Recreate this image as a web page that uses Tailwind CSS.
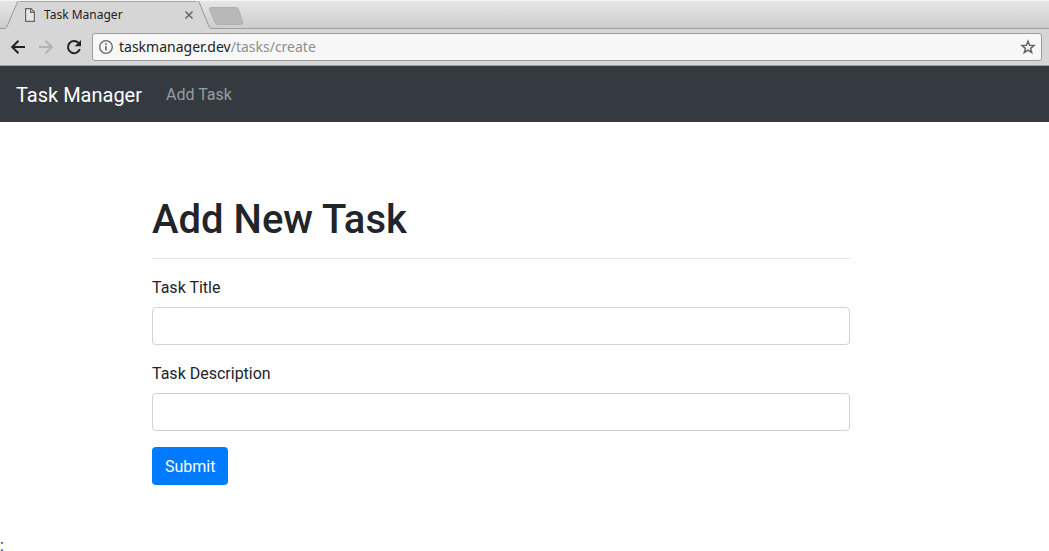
<!DOCTYPE html>
<html lang="en">
<head>
  <meta charset="UTF-8" />
  <meta name="viewport" content="width=device-width, initial-scale=1.0" />
  <title>Task Manager</title>
  <script src="https://cdn.jsdelivr.net/npm/@tailwindcss/browser@4"></script>
</head>
<body class="bg-white text-[#212529] font-['Roboto',sans-serif] h-screen flex flex-col overflow-hidden">

  <!-- Browser window -->
  <header class="shrink-0 font-['Noto_Sans',sans-serif]">
    <!-- Tab strip -->
    <div class="relative flex h-[29px] border-t border-[#f5f5f5] bg-linear-to-b from-[#e6e6e6] to-[#cccccc]">
      <div class="absolute inset-x-0 bottom-0 h-px bg-[#a0a0a0]"></div>
      <div class="relative w-[216px] h-7">
        <svg class="absolute left-0 top-0" width="250" height="28" viewBox="0 1 250 28" fill="none">
          <path d="M0 29V28.5H4C6 28.5 6.500 27.500 7 26.500L17 3C17.700 1.500 18.500 .5 20 .5H196C198 .5 199 1.500 199.500 3L209 26.500C209.500 28 210.500 28.500 212 28.500V29Z" fill="#d6d6d6" />
          <path d="M0 28.500H4C6 28.500 6.500 27.500 7 26.500L17 3C17.700 1.500 18.500 .5 20 .5" stroke="#999" />
          <path d="M20 1.500H196" stroke="#a4a4a4" />
          <path d="M196 .5C198 .5 199 1.500 199.500 3L209 26.500C209.500 28 210.500 28.500 212 28.500" stroke="#999" />
          <path d="M211 7.500H235C237 7.500 238 8 238.800 10L242.500 21.500C243.200 23.500 242.500 24.500 240.500 24.500H219C216.500 24.500 215.500 24 214.800 22L209.700 10C209 8.500 209.500 7.500 211 7.500Z" fill="#b8b8b8" stroke="#b0b0b0" />
        </svg>
        <div class="relative flex items-center h-7 pl-6 pr-[22px]">
          <svg width="12" height="14" viewBox="0 0 12 14" fill="none" stroke="#666" stroke-width="1.200">
            <path d="M1.600 .6H7L10.400 4V13.400H1.600Z" fill="#e6e6e6" />
            <path d="M6.600 .8V4.400H10.300" />
          </svg>
          <span class="ml-2 text-xs text-[#222]">Task Manager</span>
          <button type="button" aria-label="Close tab" class="ml-auto">
            <svg width="10" height="10" viewBox="0 0 10 10" stroke="#666" stroke-width="1.600">
              <path d="M1.500 1.500L8.500 8.500M8.500 1.500L1.500 8.500" />
            </svg>
          </button>
        </div>
      </div>
    </div>

    <!-- Toolbar -->
    <div class="flex items-center h-[37px] bg-[#d6d6d6] border-b border-[#9f9f9f] pl-[10px] pr-[7px]">
      <button type="button" aria-label="Back" class="mr-3">
        <svg width="16" height="16" viewBox="0 0 16 16" fill="none" stroke="#222" stroke-width="2">
          <path d="M15 8H2.500M8.500 1.700L2.200 8L8.500 14.300" />
        </svg>
      </button>
      <button type="button" aria-label="Forward" class="mr-3">
        <svg width="16" height="16" viewBox="0 0 16 16" fill="none" stroke="#b3b3b3" stroke-width="2">
          <path d="M1 8H13.500M7.500 1.700L13.800 8L7.500 14.300" />
        </svg>
      </button>
      <button type="button" aria-label="Reload" class="mr-[10px]">
        <svg width="16" height="16" viewBox="0 0 16 16" fill="none">
          <path d="M13.800 10.200A6.100 6.100 0 1 1 12.500 3.900" stroke="#222" stroke-width="2" />
          <path d="M15 1V7.300H8.700Z" fill="#222" />
        </svg>
      </button>
      <div class="flex flex-1 items-center h-[28px] rounded-[3px] border border-[#9c9c9c] bg-[#f7f7f7] pl-[6px] pr-[5px]">
        <svg width="14" height="14" viewBox="0 0 14 14" fill="none">
          <circle cx="7" cy="7" r="6.300" stroke="#666" stroke-width="1.300" />
          <path d="M7 6V10.600M7 3.300V4.900" stroke="#666" stroke-width="1.600" />
        </svg>
        <span class="flex-1 ml-[6px] text-sm text-[#222]">taskmanager.dev<span class="text-[#8e8e8e]">/tasks/create</span></span>
        <button type="button" aria-label="Bookmark this page">
          <svg width="16" height="16" viewBox="0 0 16 16" fill="none" stroke="#666" stroke-width="1.500">
            <path d="M8 2.200L9.600 6.200L14 6.500L10.600 9.300L11.700 13.500L8 11.200L4.300 13.500L5.400 9.300L2 6.500L6.400 6.200Z" />
          </svg>
        </button>
      </div>
    </div>
  </header>

  <!-- Navbar -->
  <nav class="flex shrink-0 items-center h-14 bg-[#343a40] px-4 pt-0.5">
    <a href="#" class="text-xl text-white mr-6">Task Manager</a>
    <a href="#" class="text-white/50">Add Task</a>
  </nav>

  <!-- Add task form -->
  <main class="pt-[74px] pr-[47px]">
    <div class="max-w-[698px] mx-auto">
      <h1 class="text-[40px] leading-12 font-medium">Add New Task</h1>
      <hr class="mt-[14px] mb-[17px] border-black/10" />
      <form>
        <div class="mb-[17px]">
          <label for="title" class="block mb-[7px]">Task Title</label>
          <input type="text" id="title" name="title" class="block w-full h-[38px] rounded border border-[#ced4da] bg-white px-3" />
        </div>
        <div class="mb-4">
          <label for="description" class="block mb-[7px]">Task Description</label>
          <input type="text" id="description" name="description" class="block w-full h-[38px] rounded border border-[#ced4da] bg-white px-3" />
        </div>
        <button type="submit" class="block h-[38px] rounded bg-[#007bff] px-[13px] pt-0.5 text-white">Submit</button>
      </form>
    </div>
  </main>
  <p class="mt-[49px]">:</p>
</body>
</html>
